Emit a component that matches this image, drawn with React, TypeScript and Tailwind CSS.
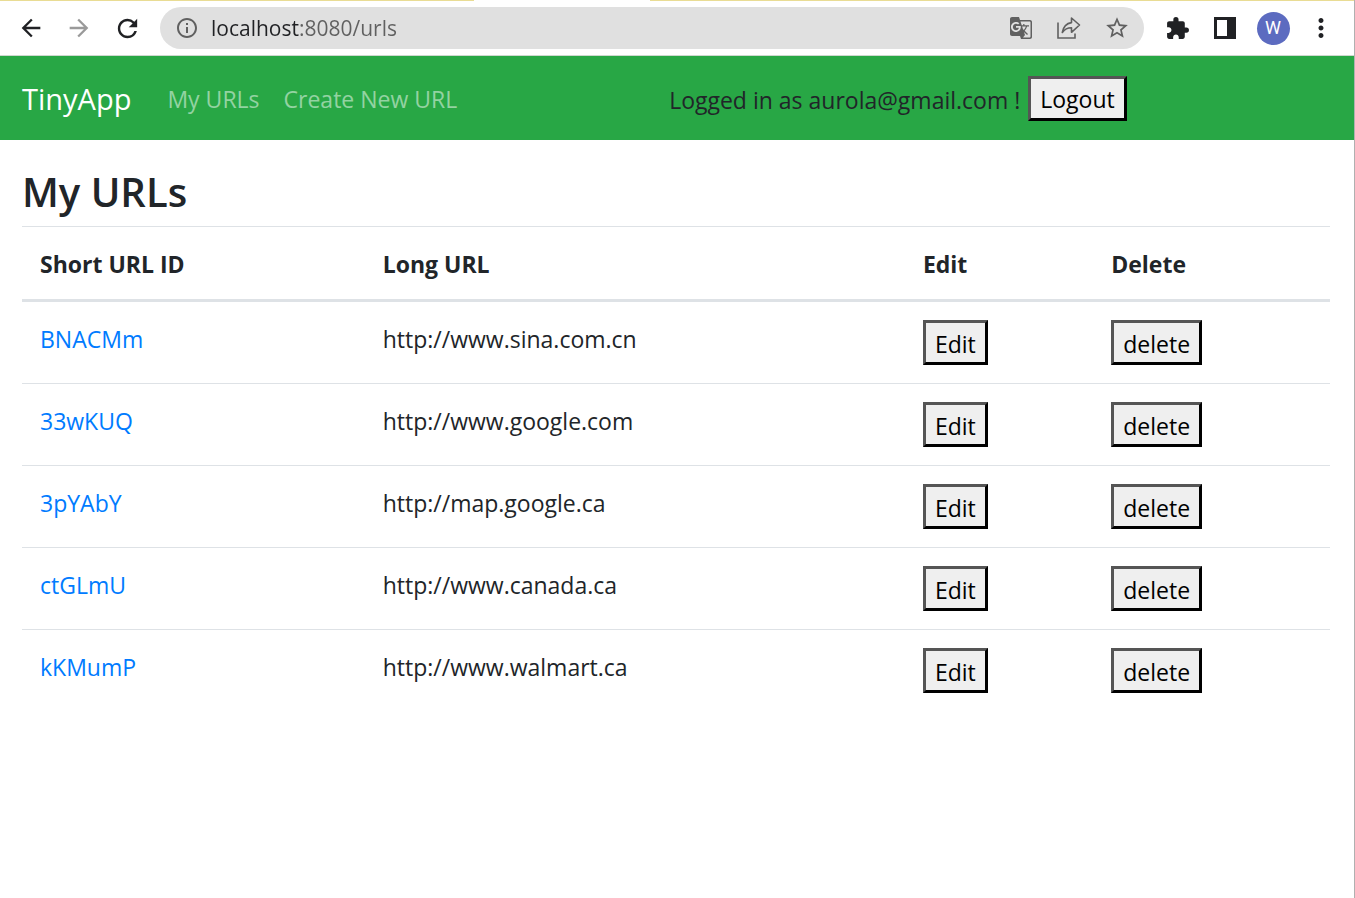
import type { ReactNode } from "react";
import { MdArrowBack, MdArrowForward, MdRefresh, MdInfoOutline, MdStarBorder, MdExtension, MdMoreVert, MdGTranslate } from "react-icons/md";

const urls = [
  { id: "BNACMm", longUrl: "http://www.sina.com.cn" },
  { id: "33wKUQ", longUrl: "http://www.google.com" },
  { id: "3pYAbY", longUrl: "http://map.google.ca" },
  { id: "ctGLmU", longUrl: "http://www.canada.ca" },
  { id: "kKMumP", longUrl: "http://www.walmart.ca" },
];

function IconButton({ label, children }: { label: string; children: ReactNode }) {
  return (
    <button type="button" aria-label={label} className="flex size-12 shrink-0 items-center justify-center">
      {children}
    </button>
  );
}

function ShareIcon() {
  return (
    <svg viewBox="0 0 26 24" className="h-6 w-6.5" fill="none" stroke="currentColor" strokeWidth="1.6" aria-hidden="true">
      <path d="M2 6.5V22h17v-4.5" />
      <path d="M15.500 2v4.600C9.500 7.500 7.200 11.500 6.300 16.500c2.500-3.600 5.200-4.800 9.200-4.800v4.600L23.500 9z" strokeLinejoin="round" />
    </svg>
  );
}

function SidePanelIcon() {
  return (
    <svg viewBox="0 0 22 22" className="size-5.5" aria-hidden="true">
      <path fill="currentColor" fillRule="evenodd" d="M0 0h22v22H0zM3 3v16h10V3z" />
    </svg>
  );
}

function BrowserBar() {
  return (
    <header className="border-b border-[#cfd8cf] bg-white">
      <div className="flex h-px justify-between">
        <div className="w-[35%] bg-[#e9dc94]" />
        <div className="w-[52%] bg-[#e9dc94]" />
      </div>
      <div className="flex h-[54px] items-center pr-[9px] pl-[7px] text-[#202124]">
        <IconButton label="Back"><MdArrowBack size={28} /></IconButton>
        <IconButton label="Forward"><MdArrowForward size={28} className="text-[#9a9a9a]" /></IconButton>
        <IconButton label="Reload"><MdRefresh size={29} /></IconButton>
        <div className="ml-[9px] flex h-[42px] flex-1 items-center rounded-full bg-[#e0e0e0] pr-[3px] pl-[15px] text-[#606060]">
          <MdInfoOutline size={24} className="shrink-0" />
          <input
            type="text"
            aria-label="Address"
            defaultValue="localhost:8080/urls"
            className="ml-3 min-w-0 flex-1 bg-linear-to-r from-[#202124] from-[88px] to-[#606060] to-[88px] bg-clip-text text-[21px] text-transparent outline-none"
          />
          <IconButton label="Translate this page"><MdGTranslate size={24} /></IconButton>
          <IconButton label="Share this page"><ShareIcon /></IconButton>
          <IconButton label="Bookmark this page"><MdStarBorder size={26} /></IconButton>
        </div>
        <div className="ml-[9px] flex">
          <IconButton label="Extensions"><MdExtension size={25} /></IconButton>
          <IconButton label="Side panel"><SidePanelIcon /></IconButton>
          <IconButton label="Profile">
            <span className="flex size-[33px] items-center justify-center rounded-full bg-[#5c6bc0] font-[Roboto] text-lg text-white">W</span>
          </IconButton>
          <IconButton label="Menu"><MdMoreVert size={30} /></IconButton>
        </div>
      </div>
    </header>
  );
}

function OutsetButton({ children }: { children: ReactNode }) {
  return (
    <button
      type="submit"
      className="h-[45px] border-3 border-t-[#555] border-r-black border-b-black border-l-[#555] bg-[#efefef] px-[9px] pt-0.5 leading-9 text-black"
    >
      {children}
    </button>
  );
}

function NavBar() {
  return (
    <nav className="flex h-[84px] items-center bg-[#28a745] px-[22px]">
      <a href="/urls" className="pt-0.5 text-[29px] leading-9 text-white">TinyApp</a>
      <div className="ml-9 flex flex-1 gap-6 pt-0.5 text-white/50">
        <a href="/urls">My URLs</a>
        <a href="/urls/new">Create New URL</a>
      </div>
      <form className="flex w-[50.6%] items-center gap-2" onSubmit={(event) => event.preventDefault()}>
        <span className="pt-1">Logged in as aurola@gmail.com !</span>
        <OutsetButton>Logout</OutsetButton>
      </form>
    </nav>
  );
}

function UrlTable() {
  return (
    <table className="w-full table-fixed border-collapse text-left">
      <colgroup>
        <col className="w-[26.2%]" />
        <col className="w-[41.3%]" />
        <col className="w-[14.4%]" />
        <col className="w-[18.1%]" />
      </colgroup>
      <thead>
        <tr className="h-[74px] border-t border-b-3 border-t-[#dee2e6] border-b-[#dee2e6]">
          <th scope="col" className="px-[18px] pt-0.5 font-bold">Short URL ID</th>
          <th scope="col" className="px-[18px] pt-0.5 font-bold">Long URL</th>
          <th scope="col" className="px-[18px] pt-0.5 font-bold">Edit</th>
          <th scope="col" className="px-[18px] pt-0.5 font-bold">Delete</th>
        </tr>
      </thead>
      <tbody>
        {urls.map((url) => (
          <tr key={url.id} className="h-[82px] border-t border-[#dee2e6] align-top first:h-[83px] first:border-t-0">
            <td className="px-[18px] pt-[19px]">
              <a href={`/urls/${url.id}`} className="text-[#007bff]">{url.id}</a>
            </td>
            <td className="px-[18px] pt-[19px]">{url.longUrl}</td>
            <td className="px-[18px] pt-[18px]"><OutsetButton>Edit</OutsetButton></td>
            <td className="px-[18px] pt-[18px]"><OutsetButton>delete</OutsetButton></td>
          </tr>
        ))}
      </tbody>
    </table>
  );
}

export default function App() {
  return (
    <div className="min-h-screen border-r border-[#b0b0b0] bg-white font-['Open_Sans','Noto_Sans',sans-serif] text-[23px] leading-9 text-[#212529]">
      <BrowserBar />
      <NavBar />
      <main className="pt-6 pr-6 pl-[22px]">
        <h1 className="mb-1.5 text-[40px] leading-14 font-semibold">My URLs</h1>
        <UrlTable />
      </main>
    </div>
  );
}
